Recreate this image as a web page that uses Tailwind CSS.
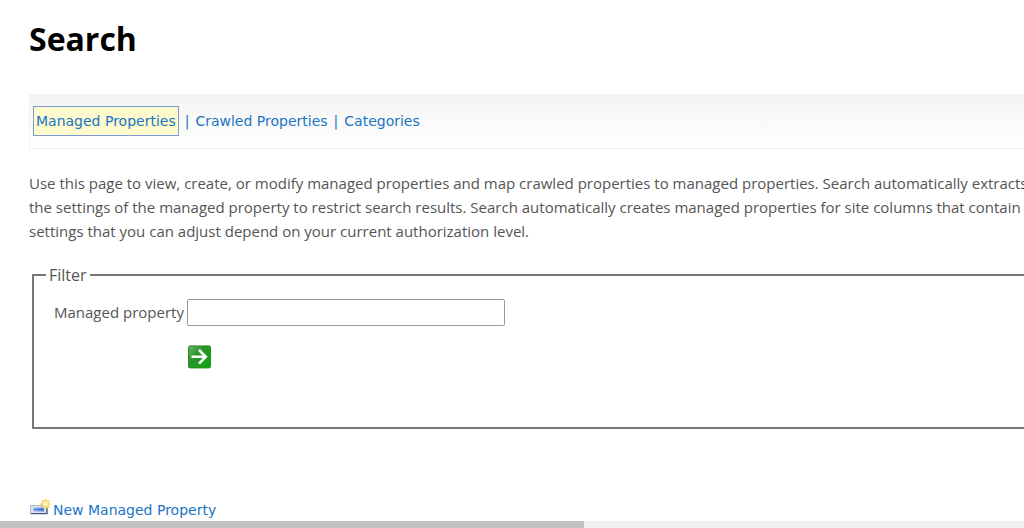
<!DOCTYPE html>
<html lang="en">
<head>
<meta charset="utf-8">
<title>Search</title>
<script src="https://cdn.jsdelivr.net/npm/@tailwindcss/browser@4"></script>
</head>
<body class="flex h-screen flex-col overflow-hidden bg-white font-['Open_Sans','Noto_Sans',sans-serif] text-[15px] text-[#555]">
<main class="min-h-0 grow overflow-hidden pt-[15px] pl-[29px]">
  <h1 class="text-[32px] leading-12 font-bold text-black">Search</h1>
  <nav class="mt-[31px] flex h-[55px] items-center border-b border-l border-[#f2f2f2] bg-linear-to-b from-[#f4f4f4] to-white pl-[3px] font-['DejaVu_Sans',sans-serif] text-[14px] text-[#1a75c4]">
    <a href="#" class="border border-[#7d9bd3] bg-[#fffacd] px-[2px] leading-7">Managed Properties</a>
    <span class="px-[6px]">|</span>
    <a href="#">Crawled Properties</a>
    <span class="px-[6px]">|</span>
    <a href="#">Categories</a>
  </nav>
  <p class="mt-[22px] leading-6 whitespace-nowrap">Use this page to view, create, or modify managed properties and map crawled properties to managed properties. Search automatically extracts crawled<br>the settings of the managed property to restrict search results. Search automatically creates managed properties for site columns that contain values<br>settings that you can adjust depend on your current authorization level.</p>
  <fieldset class="mt-5 ml-[3px] h-[166px] border-2 border-r-0 border-[#777] pl-5">
    <legend class="-ml-2 px-[3px] text-[16px] leading-6">Filter</legend>
    <div class="grid grid-cols-[133px_1fr] items-center gap-y-[19px] pt-3">
      <label for="property">Managed property</label>
      <input id="property" type="text" class="h-[27px] w-[318px] rounded-xs border border-[#999] bg-white px-1">
      <button type="button" aria-label="Filter" class="col-start-2 h-6 w-6">
        <svg viewBox="0 0 24 24" class="h-6 w-6">
          <defs><linearGradient id="go" x1="0" y1="0" x2="1" y2="1"><stop stop-color="#6bb66b"/><stop offset=".4" stop-color="#2a932a"/><stop offset="1" stop-color="#08a808"/></linearGradient></defs>
          <rect x="1.5" y=".9" width="22" height="22" rx="1.5" fill="url(#go)" stroke="#288a28"/>
          <path d="M4.5 11.8h14M12 5l6.8 6.8-6.8 6.8" fill="none" stroke="#fff" stroke-width="2.6"/>
        </svg>
      </button>
    </div>
  </fieldset>
  <a href="#" class="mt-[69px] flex items-center font-['DejaVu_Sans',sans-serif] text-[14px] leading-6 text-[#1a75c4]">
    <svg viewBox="0 0 24 18" class="-mt-1 h-[18px] w-6">
      <defs><linearGradient id="card"><stop stop-color="#a8c5ef"/><stop offset="1" stop-color="#4b78cc"/></linearGradient></defs>
      <path d="M1.5 6.5h16v8h-16z" fill="#dce5f2" stroke="#aab7cb"/>
      <path d="M2 14.7h16V8.5" fill="none" stroke="#475777" stroke-width="1.3"/>
      <path d="M4 8.5h11v4H4z" fill="url(#card)"/>
      <path d="M5 10.5h9" stroke="#3e6fca"/>
      <path d="M16.5 0v10M11.5 5h10M13 1.5l7 7M20 1.5l-7 7" stroke="#f7d568" stroke-width="2.2"/>
      <circle cx="16.5" cy="5" r="2.5" fill="#fff3b5"/>
    </svg>New Managed Property</a>
</main>
<div class="h-[7px] shrink-0 bg-[#f0f0f0]"><div class="h-full w-[57%] bg-[#c1c1c1]"></div></div>
</body>
</html>
